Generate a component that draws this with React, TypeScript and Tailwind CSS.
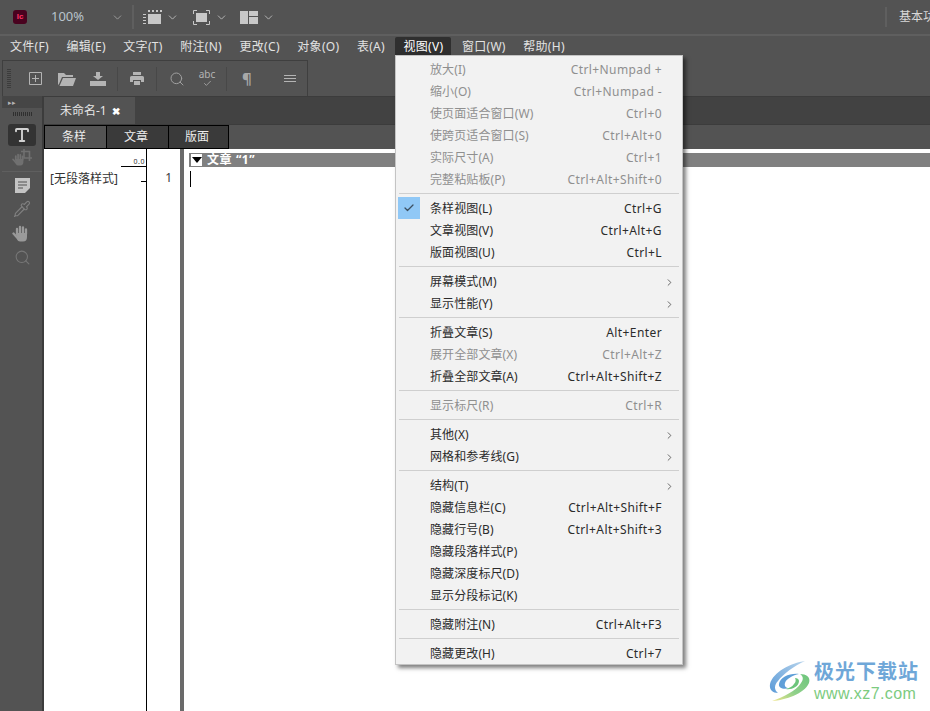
import { ChevronDown, ChevronRight, Check, Search, Pipette, Type } from 'lucide-react';

const FONT = "font-['Noto_Sans','Noto_Sans_CJK_SC',sans-serif]";

const MENUS = ['文件(F)', '编辑(E)', '文字(T)', '附注(N)', '更改(C)', '对象(O)', '表(A)', '视图(V)', '窗口(W)', '帮助(H)'];

type Item = { label: string; key?: string; off?: boolean; sub?: boolean; checked?: boolean };

const GROUPS: Item[][] = [
  [
    { label: '放大(I)', key: 'Ctrl+Numpad +', off: true },
    { label: '缩小(O)', key: 'Ctrl+Numpad -', off: true },
    { label: '使页面适合窗口(W)', key: 'Ctrl+0', off: true },
    { label: '使跨页适合窗口(S)', key: 'Ctrl+Alt+0', off: true },
    { label: '实际尺寸(A)', key: 'Ctrl+1', off: true },
    { label: '完整粘贴板(P)', key: 'Ctrl+Alt+Shift+0', off: true },
  ],
  [
    { label: '条样视图(L)', key: 'Ctrl+G', checked: true },
    { label: '文章视图(V)', key: 'Ctrl+Alt+G' },
    { label: '版面视图(U)', key: 'Ctrl+L' },
  ],
  [
    { label: '屏幕模式(M)', sub: true },
    { label: '显示性能(Y)', sub: true },
  ],
  [
    { label: '折叠文章(S)', key: 'Alt+Enter' },
    { label: '展开全部文章(X)', key: 'Ctrl+Alt+Z', off: true },
    { label: '折叠全部文章(A)', key: 'Ctrl+Alt+Shift+Z' },
  ],
  [{ label: '显示标尺(R)', key: 'Ctrl+R', off: true }],
  [
    { label: '其他(X)', sub: true },
    { label: '网格和参考线(G)', sub: true },
  ],
  [
    { label: '结构(T)', sub: true },
    { label: '隐藏信息栏(C)', key: 'Ctrl+Alt+Shift+F' },
    { label: '隐藏行号(B)', key: 'Ctrl+Alt+Shift+3' },
    { label: '隐藏段落样式(P)' },
    { label: '隐藏深度标尺(D)' },
    { label: '显示分段标记(K)' },
  ],
  [{ label: '隐藏附注(N)', key: 'Ctrl+Alt+F3' }],
  [{ label: '隐藏更改(H)', key: 'Ctrl+7' }],
];

function MenuRow({ item }: { item: Item }) {
  return (
    <div className={`relative flex h-[22px] items-center pl-[34px] pr-[20px] pt-[2px] text-[12px] ${item.off ? 'text-[#8f8f8f]' : 'text-[#2b2b2b]'}`}>
      {item.checked && (
        <div className="absolute left-[2px] top-0 flex h-[22px] w-[22px] items-center justify-center bg-[#90c8f6]">
          <Check size={12} strokeWidth={2.5} className="text-[#3c4f60]" />
        </div>
      )}
      <span className="flex-1 tracking-[0.1px]">{item.label}</span>
      {item.key && <span className="tracking-[0.4px]">{item.key}</span>}
      {item.sub && <ChevronRight size={11} strokeWidth={1.7} className="mr-[-13px] text-[#444]" />}
    </div>
  );
}

function ViewMenu() {
  return (
    <div className="absolute left-[395px] top-[55px] z-20 w-[288px] border border-[#c4c4c4] bg-[#f2f2f2] pt-[2px] shadow-[3px_3px_4px_rgba(0,0,0,0.5)]">
      {GROUPS.map((group, i) => (
        <div key={i}>
          {i > 0 && <div className="mx-[3px] my-[3px] h-px bg-[#cfcfcf]" />}
          {group.map((item) => (
            <MenuRow key={item.label} item={item} />
          ))}
        </div>
      ))}
    </div>
  );
}

function TopBar() {
  return (
    <div className="flex h-[34px] items-center text-[#c8c8c8]">
      <div className="ml-[13px] flex h-[14px] w-[14px] items-center justify-center rounded-[3px] bg-[#49021f] font-['Liberation_Sans',sans-serif] text-[8px] font-bold leading-none text-[#ff3366]">
        Ic
      </div>
      <span className="ml-[24px] w-[41px] text-[13px] text-[#b9c3cc]">100%</span>
      <ChevronDown size={13} strokeWidth={1.5} className="ml-[19px] text-[#a8a8a8]" />
      <div className="ml-[8px] h-[24px] w-[2px] bg-[#5f5f5f]" />
      <svg width="19" height="15" viewBox="0 0 19 15" className="ml-[9px]" fill="currentColor">
        <rect x="5" y="4" width="13" height="10" />
        <path d="M5 0h2v2H5zM9 0h2v2H9zM13 0h2v2h-2zM17 0h2v2h-2zM0 4h3v1H0zM0 7h3v1H0zM0 10h3v1H0zM0 13h3v1H0z" />
      </svg>
      <ChevronDown size={13} strokeWidth={1.5} className="ml-[4px]" />
      <svg width="17" height="15" viewBox="0 0 17 15" className="ml-[14px]" fill="none" stroke="currentColor">
        <rect x="3" y="3" width="11" height="9" fill="currentColor" stroke="none" />
        <path d="M.5 4V.5H4M13 .5h3.5V4M16.5 11v3.5H13M4 14.5H.5V11" />
      </svg>
      <ChevronDown size={13} strokeWidth={1.5} className="ml-[5px]" />
      <svg width="18" height="13" viewBox="0 0 18 13" className="ml-[12px]" fill="currentColor">
        <rect x="0" y="0" width="8" height="13" />
        <rect x="9" y="0" width="9" height="5" />
        <rect x="9" y="6" width="9" height="7" />
      </svg>
      <ChevronDown size={13} strokeWidth={1.5} className="ml-[4px]" />
      <div className="ml-auto flex items-center">
        <div className="h-[20px] w-[2px] bg-[#5f5f5f]" />
        <span className="ml-[12px] w-[31px] overflow-hidden whitespace-nowrap text-[12px] text-[#d8d8d8]">基本功能</span>
      </div>
    </div>
  );
}

function MenuBar() {
  return (
    <div className="flex h-[24px] items-start border-t-2 border-[#5f5f5f] pl-[3px] text-[12px] tracking-[0.3px] text-[#e2e2e2]">
      {MENUS.map((m) => (
        <span
          key={m}
          className={`mr-[3.5px] mt-[1px] flex h-[18px] items-center rounded-t-[2px] pt-[2px] ${m === '视图(V)' ? 'bg-[#2f2f2f] px-[8px] text-white' : 'px-[7px]'}`}
        >
          {m}
        </span>
      ))}
    </div>
  );
}

function Divider() {
  return <div className="h-[24px] w-px bg-[#484848]" />;
}

function ToolBar() {
  return (
    <div className="ml-[2px] mt-[2px] flex h-[36px] w-[306px] items-center border-l border-r border-t border-[#3f3f3f] pl-[4px] text-[#b4b4b4]">
      <div className="h-[20px] w-[4px] bg-[repeating-linear-gradient(to_bottom,#3c3c3c_0,#3c3c3c_1px,transparent_1px,transparent_2px)]" />
      <svg width="13" height="13" viewBox="0 0 13 13" className="ml-[18px]" fill="none" stroke="currentColor">
        <path d="M.5.5h12v12H.5zM6.5 3v7M3 6.5h7" />
      </svg>
      <svg width="18" height="14" viewBox="0 0 18 14" className="ml-[16px]" fill="currentColor">
        <path d="M0 1h6l2 2h7v2H4L1 12 0 13z" />
        <path d="M5 6h13l-3 8H1.500z" />
      </svg>
      <svg width="16" height="14" viewBox="0 0 16 14" className="ml-[14px]" fill="currentColor">
        <path d="M6 0h4v4h3L8 8 3 4h3zM0 9h16v5H0z" />
      </svg>
      <div className="ml-[11px]"><Divider /></div>
      <svg width="14" height="13" viewBox="0 0 14 13" className="ml-[12px]" fill="currentColor">
        <path d="M3 0h8v3H3zM1.500 4h11q1.500 0 1.500 1.500V10h-3V8H3v2H0V5.500Q0 4 1.500 4zM4 9h6v4H4z" />
      </svg>
      <div className="ml-[12px]"><Divider /></div>
      <Search size={16} strokeWidth={1.5} className="ml-[12px] text-[#a0a0a0]" />
      <div className="ml-[14px] flex w-[16px] flex-col items-center text-[10px] leading-[10px]">
        <span>abc</span>
        <Check size={9} strokeWidth={2} />
      </div>
      <div className="ml-[11px]"><Divider /></div>
      <span className="ml-[15px] text-[15px] font-bold text-[#a8a8a8]">¶</span>
      <svg width="12" height="8" viewBox="0 0 12 8" className="ml-[32px]" fill="none" stroke="currentColor">
        <path d="M0 .5h12M0 3.5h12M0 6.5h12" />
      </svg>
    </div>
  );
}

function HandShape() {
  return (
    <>
      <path d="M5 9V4M8 8V2M11 8V2.500M14 9V4.500" strokeWidth="2.300" strokeLinecap="round" fill="none" />
      <path d="M1.500 8.500L5.500 13" strokeWidth="2.300" strokeLinecap="round" fill="none" />
      <path d="M4 8h11v4q0 4.500-4 4.500H8q-2 0-3-2z" stroke="none" />
    </>
  );
}

function HandIcon({ className }: { className: string }) {
  return (
    <svg width="20" height="17" viewBox="0 0 20 17" className={className} fill="currentColor" stroke="currentColor">
      <HandShape />
    </svg>
  );
}

function HandCropIcon({ className }: { className: string }) {
  return (
    <svg width="20" height="17" viewBox="0 0 20 17" className={className} fill="currentColor" stroke="currentColor">
      <g transform="translate(0 4) scale(0.76)">
        <HandShape />
      </g>
      <path d="M12 0v9h8M9 2.500h8.500V12" fill="none" strokeWidth="1.600" />
    </svg>
  );
}

function ToolPanel() {
  return (
    <div className="flex w-[44px] shrink-0 flex-col items-center border-r-2 border-[#3c3c3c] pl-[2px] text-[#8a8a8a]">
      <div className="flex h-[12px] w-full items-center bg-[#464646] pl-[6px] text-[7px] leading-none text-[#b4b4b4]">▸▸</div>
      <div className="mt-[4px] h-[4px] w-[19px] bg-[repeating-linear-gradient(to_right,#2f2f2f_0,#2f2f2f_1px,transparent_1px,transparent_2px)]" />
      <div className="mt-[8px] flex h-[22px] w-[28px] items-center justify-center rounded-[3px] bg-[#333333]">
        <Type size={18} strokeWidth={2.5} className="text-[#d2d2d2]" />
      </div>
      <HandCropIcon className="mt-[3px] text-[#707070]" />
      <div className="mt-[5px] h-px w-full bg-[#5f5f5f]" />
      <svg width="15" height="15" viewBox="0 0 15 15" className="mt-[6px] text-[#c4c4c4]">
        <path d="M0 0h15v10l-5 5H0z" fill="currentColor" />
        <path d="M3 4h9M3 7h9M3 10h5" stroke="#535353" strokeWidth="1" />
      </svg>
      <Pipette size={18} strokeWidth={1.5} className="mt-[7px] text-[#808080]" />
      <HandIcon className="mt-[7px] text-[#9a9a9a]" />
      <Search size={17} strokeWidth={1.5} className="mt-[7px] text-[#777]" />
    </div>
  );
}

function DocArea() {
  return (
    <div className="flex min-w-0 flex-1 flex-col">
      <div className="flex h-[29px] border-y border-[#3c3c3c] bg-[#424242]">
        <div className="flex w-[91px] items-center bg-[#535353] pl-[16px] text-[12px] text-[#e6e6e6]">
          未命名-1
          <span className="ml-[5px] text-[10px] font-bold leading-none text-white">✖</span>
        </div>
      </div>
      <div className="flex h-[24px] bg-[#535353] text-[12px] text-[#ececec]">
        {['条样', '文章', '版面'].map((t, i) => (
          <div
            key={t}
            className={`flex items-center justify-center border border-black pr-[3px] ${i === 0 ? 'w-[63px] bg-[#535353]' : i === 1 ? 'w-[62px] border-l-0 bg-[#3a3a3a]' : 'w-[60px] border-l-0 bg-[#3a3a3a]'}`}
          >
            {t}
          </div>
        ))}
      </div>
      <div className="flex min-h-0 flex-1 bg-white text-[12px] text-[#333]">
        <div className="relative w-[103px] shrink-0 border-r border-black pl-[6px]">
          <div className="absolute right-0 top-[9px] w-[25px] border-b border-black pr-[1px] text-right text-[7px] leading-[8px] tracking-[0.5px]">0.0</div>
          <div className="mt-[22px] leading-[16px]">[无段落样式]</div>
          <div className="absolute right-0 top-[32px] h-px w-[5px] bg-black" />
        </div>
        <div className="w-[33px] shrink-0 pr-[8px] pt-[21px] text-right text-[12px] leading-[16px] text-[#3a3a3a]">1</div>
        <div className="w-[4px] shrink-0 bg-[#6a6a6a]" />
        <div className="flex-1 pl-[5px] pt-[4px]">
          <div className="flex h-[14px] items-center bg-[#808080] pl-[2px] text-[12px] font-bold text-white">
            <div className="flex h-[12px] w-[11px] items-center justify-center bg-white">
              <div className="h-0 w-0 border-x-[5px] border-t-[6px] border-x-transparent border-t-black" />
            </div>
            <span className="ml-[5px] tracking-[0.6px]">文章 “1”</span>
          </div>
          <div className="ml-[1px] mt-[4px] h-[16px] w-px bg-black" />
        </div>
      </div>
    </div>
  );
}

function Watermark() {
  return (
    <div className="absolute bottom-[9px] right-[11px] z-30 flex items-center">
      <svg width="45" height="41" viewBox="0 0 45 41" fill="none">
        <defs>
          <linearGradient id="wmBlue" x1="0" y1="1" x2="1" y2="0">
            <stop offset="0" stopColor="#5b9bd8" />
            <stop offset="1" stopColor="#b8d4ec" />
          </linearGradient>
          <linearGradient id="wmGreen" x1="0" y1="1" x2="1" y2="0">
            <stop offset="0" stopColor="#f2e68a" />
            <stop offset="0.45" stopColor="#8fd08a" />
            <stop offset="1" stopColor="#6cc57c" />
          </linearGradient>
        </defs>
        <path d="M36 0C22 2 4 11 1 23c-1 6 3 9 8 9-4-3-4-8 0-12C14 13 25 5 36 0z" fill="url(#wmBlue)" />
        <path d="M30 13c-9-1-19 3-20 10-1 4 5 6 10 4-3 0-5-2-4-5 1-4 8-8 14-9z" fill="#5f9fd8" />
        <path d="M3 40c14-1 32-7 37-18 2-6-3-9-9-9 3 2 4 5 1 9-5 8-18 14-29 18z" fill="url(#wmGreen)" />
        <path d="M17 28c5 1 13-2 13-8 0-2-2-3-4-3 1 2 1 4-1 6-2 3-5 4-8 5z" fill="#6cc57c" />
      </svg>
      <div className="flex flex-col">
        <span className="text-[20px] font-semibold leading-[24px] tracking-[1px] text-[#6fa7d8]">极光下载站</span>
        <span className="mt-[1px] font-['Liberation_Sans',sans-serif] text-[16px] leading-[17px] tracking-[0.4px] text-[#7ccb80]">www.xz7.com</span>
      </div>
    </div>
  );
}

export default function App() {
  return (
    <div className={`relative flex h-[711px] w-[930px] flex-col overflow-hidden bg-[#535353] ${FONT}`}>
      <TopBar />
      <MenuBar />
      <ToolBar />
      <div className="flex min-h-0 flex-1">
        <ToolPanel />
        <DocArea />
      </div>
      <ViewMenu />
      <Watermark />
    </div>
  );
}
